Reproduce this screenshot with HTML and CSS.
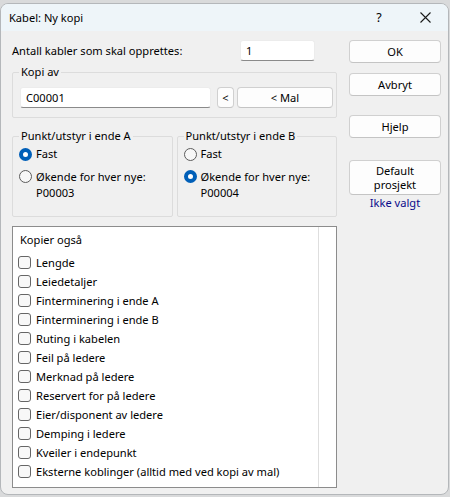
FILE: index.html
```html
<!DOCTYPE html>
<html lang="no">
<head>
<meta charset="utf-8">
<title>Kabel: Ny kopi</title>
<link rel="stylesheet" href="styles.css">
</head>
<body>
<div class="window">
  <div class="titlebar">
    <span class="title">Kabel: Ny kopi</span>
    <span class="cap help">?</span>
    <span class="cap close"><svg width="11" height="11" viewBox="0 0 11 11"><path d="M0.5 0.5 L10.5 10.5 M10.5 0.5 L0.5 10.5" stroke="#1a1a1a" stroke-width="1.1" fill="none"/></svg></span>
  </div>
  <div class="content">
    <div class="left">
      <div class="count-row">
        <span class="lbl">Antall kabler som skal opprettes:</span>
        <div class="input count">1</div>
      </div>
      <fieldset class="group kopi">
        <legend>Kopi av</legend>
        <div class="kopi-row">
          <div class="input src">C00001</div>
          <div class="btn tiny">&lt;</div>
          <div class="btn mal">&lt; Mal</div>
        </div>
      </fieldset>
      <div class="ends">
        <fieldset class="group end">
          <legend>Punkt/utstyr i ende A</legend>
          <div class="radio-row"><span class="radio on"></span><span>Fast</span></div>
          <div class="radio-row two"><span class="radio"></span><span>Økende for hver nye:<br>P00003</span></div>
        </fieldset>
        <fieldset class="group end">
          <legend>Punkt/utstyr i ende B</legend>
          <div class="radio-row"><span class="radio"></span><span>Fast</span></div>
          <div class="radio-row two"><span class="radio on"></span><span>Økende for hver nye:<br>P00004</span></div>
        </fieldset>
      </div>
      <div class="listbox">
        <div class="listcol">
          <div class="list-head">Kopier også</div>
          <div class="chk-row"><span class="chk"></span>Lengde</div>
          <div class="chk-row"><span class="chk"></span>Leiedetaljer</div>
          <div class="chk-row"><span class="chk"></span>Finterminering i ende A</div>
          <div class="chk-row"><span class="chk"></span>Finterminering i ende B</div>
          <div class="chk-row"><span class="chk"></span>Ruting i kabelen</div>
          <div class="chk-row"><span class="chk"></span>Feil på ledere</div>
          <div class="chk-row"><span class="chk"></span>Merknad på ledere</div>
          <div class="chk-row"><span class="chk"></span>Reservert for på ledere</div>
          <div class="chk-row"><span class="chk"></span>Eier/disponent av ledere</div>
          <div class="chk-row"><span class="chk"></span>Demping i ledere</div>
          <div class="chk-row"><span class="chk"></span>Kveiler i endepunkt</div>
          <div class="chk-row"><span class="chk"></span>Eksterne koblinger (alltid med ved kopi av mal)</div>
        </div>
      </div>
    </div>
    <div class="right">
      <div class="btn side ok">OK</div>
      <div class="btn side cancel">Avbryt</div>
      <div class="btn side helpbtn">Hjelp</div>
      <div class="btn side def">Default<br>prosjekt</div>
      <div class="link">Ikke valgt</div>
    </div>
  </div>
</div>
</body>
</html>
```

FILE: styles.css
```css
* { box-sizing: border-box; }
html, body { margin: 0; padding: 0; }
body {
  width: 450px;
  height: 497px;
  background: #d9dadb;
  font-family: "Noto Sans", "Open Sans", sans-serif;
  font-size: 11.1px;
  color: #000;
  overflow: hidden;
}
.window {
  margin: 3px 1px 0 0;
  width: 449px;
  height: 492px;
  border: 1px solid #b4b7ba;
  border-radius: 8px;
  background: #f0f0f0;
  overflow: hidden;
  display: flex;
  flex-direction: column;
}
.titlebar {
  height: 27px;
  background: #eef5f9;
  display: flex;
  align-items: center;
  flex: none;
}
.title {
  padding-left: 8px;
  flex: 1;
  line-height: 16px;
}
.cap {
  width: 46px;
  height: 27px;
  display: flex;
  align-items: center;
  justify-content: center;
}
.help { font-size: 12.5px; }
.content {
  display: flex;
  padding: 9px 0 0 11px;
  gap: 12px;
}
.left {
  width: 325px;
  display: flex;
  flex-direction: column;
}
.count-row {
  display: flex;
  align-items: center;
  height: 21px;
}
.lbl { width: 228px; line-height: 16px; }
.input {
  background: #fff;
  border: 1px solid #ececec;
  border-bottom-color: #8a8a8a;
  border-radius: 3px;
  height: 21px;
  line-height: 19px;
  padding-left: 5px;
}
.count { width: 75px; }
.group {
  margin: 0;
  border: 1px solid #dcdcdc;
  border-radius: 2px;
  min-width: 0;
}
.group legend {
  padding: 0 2px;
  line-height: 16px;
}
.kopi {
  margin-top: 3px;
  padding: 7px 3px 9px 7px;
}
.kopi legend { margin-left: -1px; }
.kopi-row {
  display: flex;
  height: 21px;
}
.src { width: 191px; }
.btn {
  background: #fdfdfd;
  border: 1px solid #d0d0d0;
  border-bottom-color: #c4c4c4;
  border-radius: 4px;
  display: flex;
  align-items: center;
  justify-content: center;
  text-align: center;
  line-height: 16px;
}
.tiny { width: 17px; margin-left: 6px; }
.mal { flex: 1; margin-left: 3px; }
.ends {
  display: flex;
  gap: 4px;
  margin-top: 10px;
}
.end {
  flex: 1;
  padding: 2px 4px 16px 6px;
}
.radio-row {
  display: flex;
  align-items: flex-start;
  line-height: 16px;
}
.radio-row.two { margin-top: 7px; line-height: 15.5px; }
.radio {
  width: 13px;
  height: 13px;
  border-radius: 50%;
  border: 1px solid #5c5c5c;
  background: #f7f7f7;
  margin: 2px 4px 0 0;
  flex: none;
}
.radio-row.two .radio { margin-top: 1px; }
.radio.on {
  border: 4px solid #005fb8;
  background: #fff;
}
.listbox {
  margin-top: 9px;
  height: 262px;
  background: #fff;
  border: 1px solid #8c8c8c;
  display: flex;
}
.listcol {
  width: 306px;
  border-right: 1px solid #dedede;
  padding: 5px 0 0 5px;
}
.list-head {
  line-height: 16px;
  padding-left: 2px;
  margin-bottom: 5px;
}
.chk-row {
  height: 19px;
  display: flex;
  align-items: center;
  white-space: nowrap;
}
.chk {
  width: 13px;
  height: 13px;
  border: 1px solid #666;
  border-radius: 3px;
  background: #f8f8f8;
  margin-right: 5px;
  flex: none;
}
.right {
  width: 92px;
  display: flex;
  flex-direction: column;
}
.side { height: 23px; }
.cancel { margin-top: 10px; }
.helpbtn { margin-top: 19px; }
.def { margin-top: 22px; height: 35px; line-height: 14px; }
.link {
  color: #0a0a8a;
  text-align: center;
  line-height: 16px;
}
```
